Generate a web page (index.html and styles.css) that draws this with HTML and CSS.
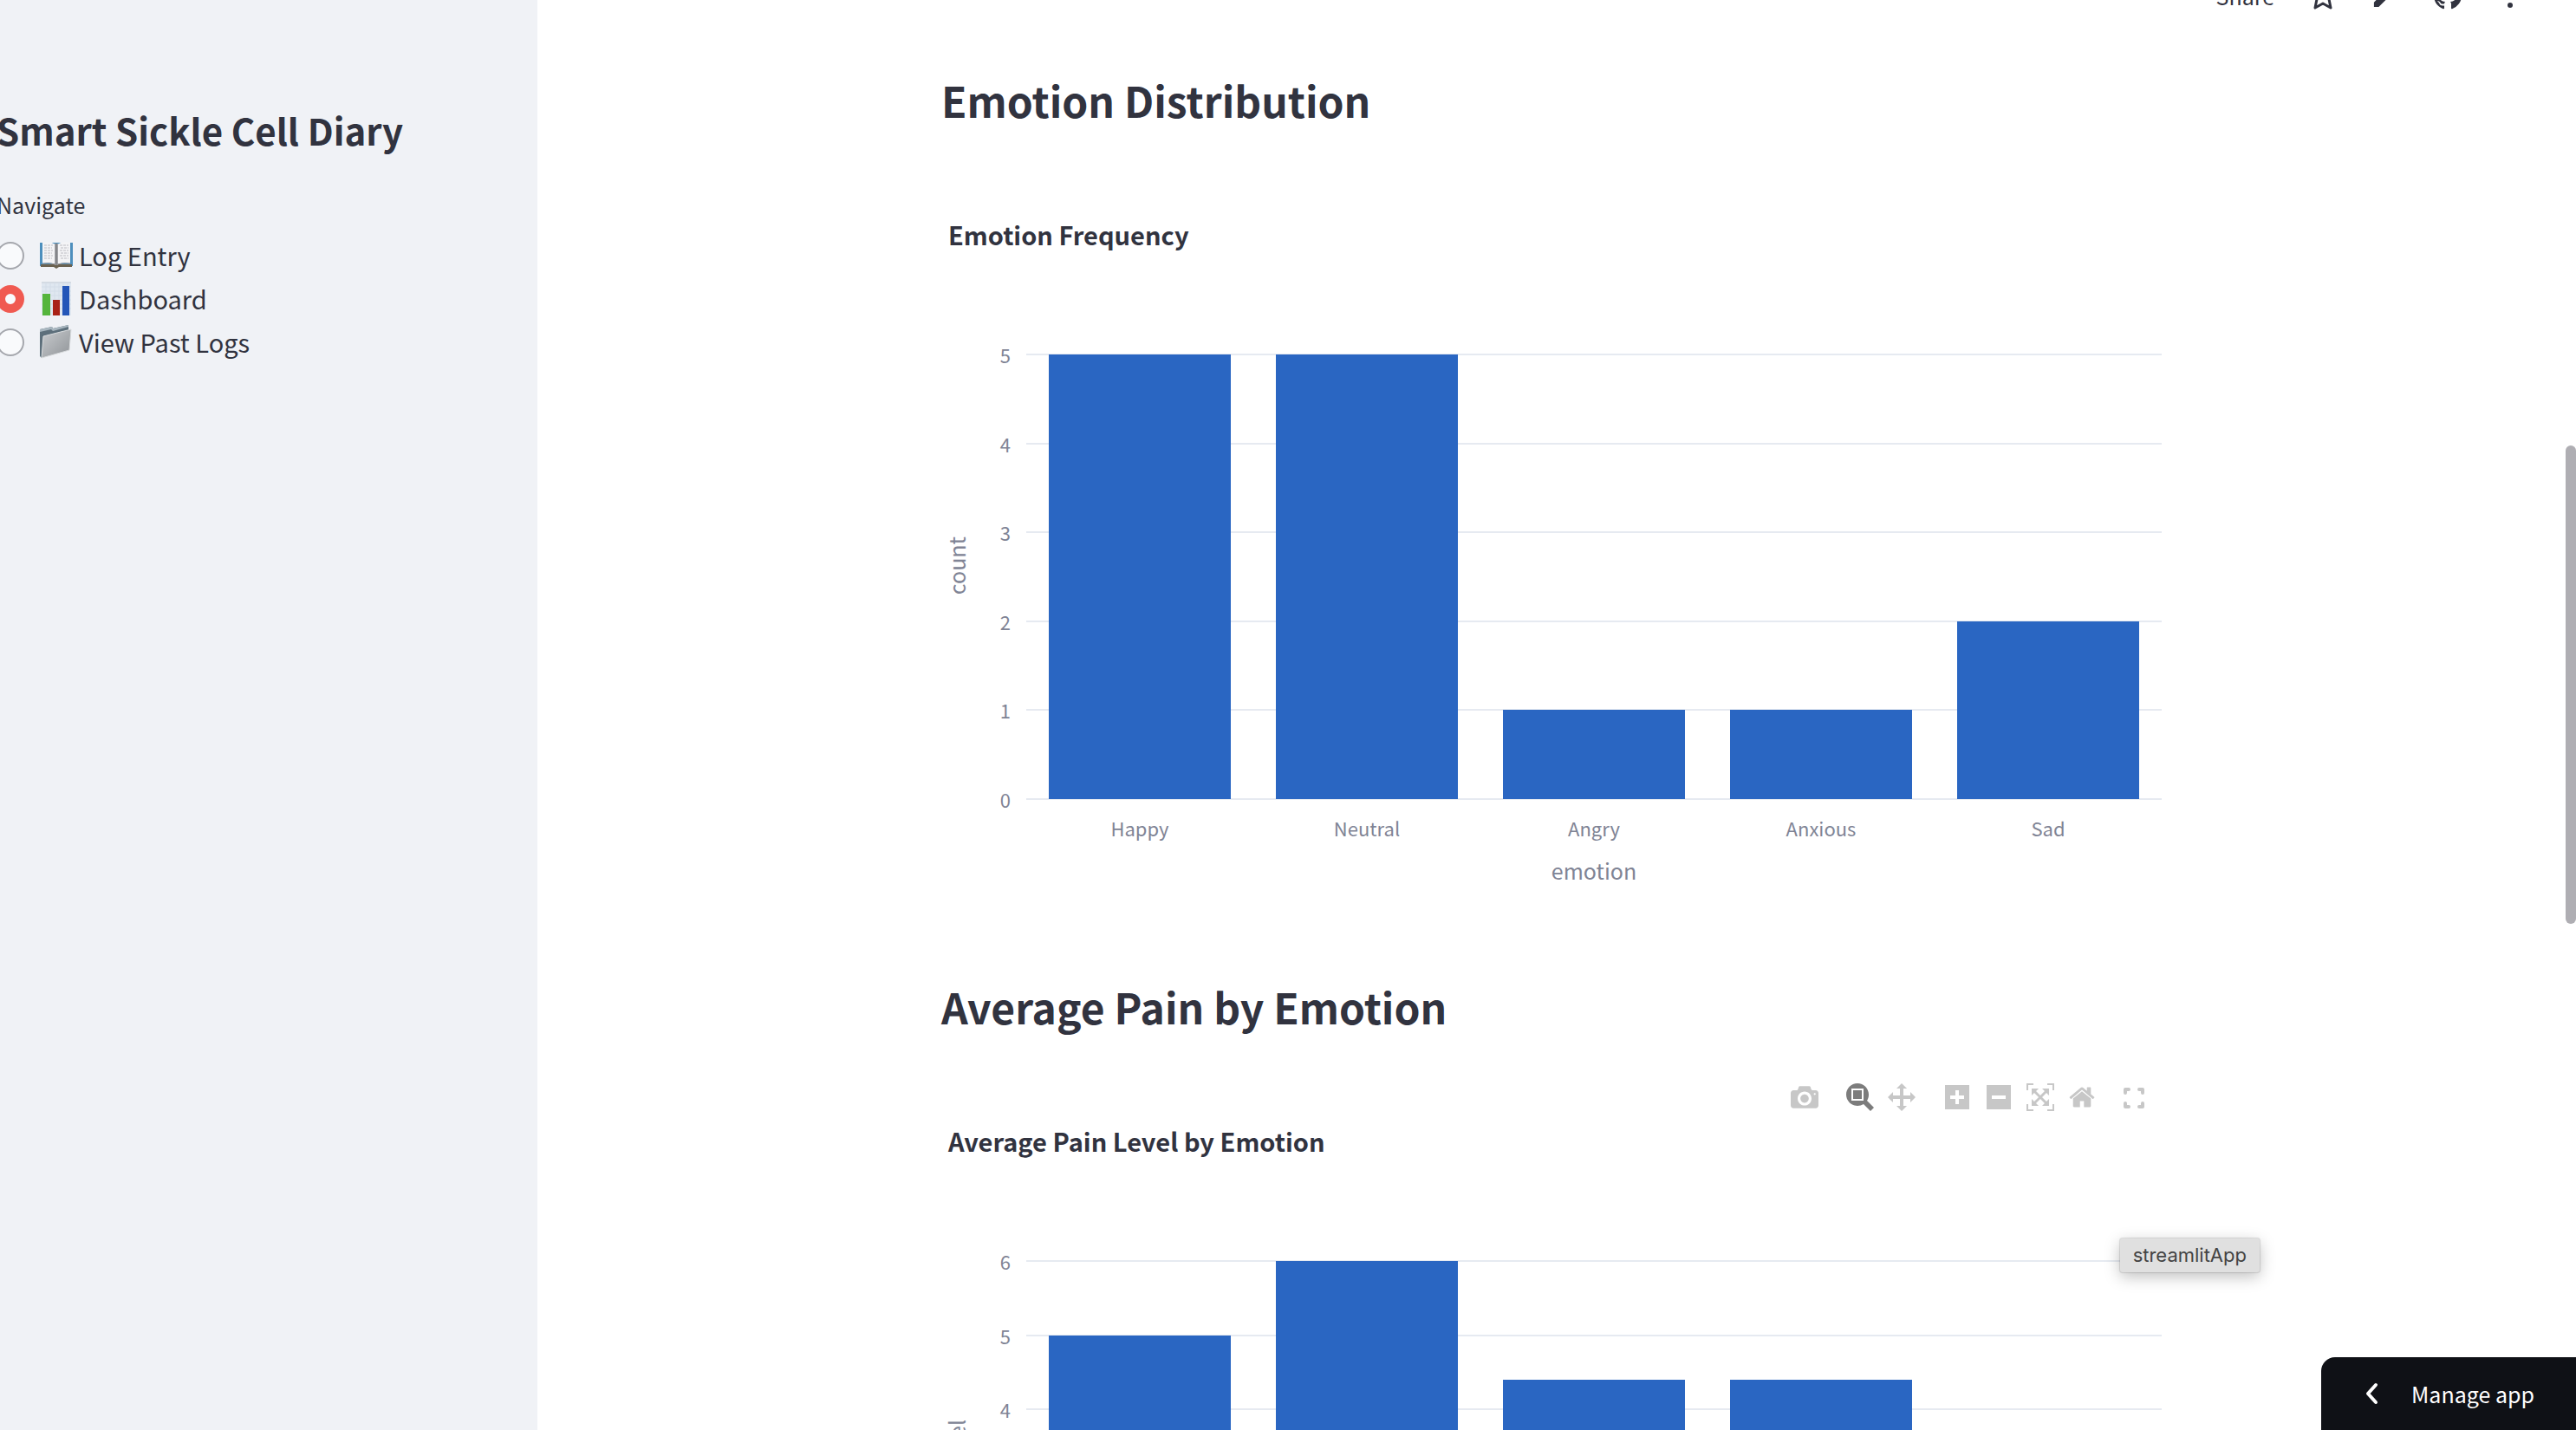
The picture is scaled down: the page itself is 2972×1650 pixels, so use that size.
FILE: index.html
```html
<!DOCTYPE html>
<html lang="en">
<head>
<meta charset="utf-8">
<meta name="viewport" content="width=device-width, initial-scale=1">
<title>Smart Sickle Cell Diary</title>
<link rel="stylesheet" href="styles.css">
</head>
<body>
<div class="app">
  <aside class="sidebar">
    <h1 class="app-title">Smart Sickle Cell Diary</h1>
    <fieldset class="nav">
      <legend class="nav-label">Navigate</legend>
      <label class="nav-item">
        <input type="radio" name="page" class="nav-radio">
        <svg class="emoji" viewBox="0 3 40 40" aria-hidden="true">
          <path d="M1 8h38v27H1z" fill="#4d8fbd"/>
          <path d="M2 33h36v3H23l-3 2-3-2H2z" fill="#6b6250"/>
          <path d="M4 8q9-2 15 2v23q-7-3-15-1z" fill="#f4f4f6"/>
          <path d="M36 8q-9-2-15 2v23q7-3 15-1z" fill="#f4f4f6"/>
          <path d="M18 9h4v25h-4z" fill="#a3a4a8"/>
          <path d="M20 9v25" stroke="#66676b"/>
          <path d="M6 11h10M6 14h9M6 17h10M6 20h9M6 23h10M6 26h9M24 11h10M25 14h9M24 17h10M25 20h9M24 23h10M25 26h9" stroke="#bcbcc2" stroke-dasharray="3 1"/>
          <path d="M4 32q8-1 15 1h2q7-2 15-1" fill="none" stroke="#8d8e92"/>
        </svg>
        <span>Log Entry</span>
      </label>
      <label class="nav-item">
        <input type="radio" name="page" class="nav-radio" checked>
        <svg class="emoji" viewBox="0 0 40 40" aria-hidden="true">
          <path d="M3 0h34v39H3z" fill="#dfe7f0"/>
          <path d="M3 1h34" stroke="#c9cfd6"/>
          <path d="M8 1v38M13 1v38M18 1v38M23 1v38M28 1v38M33 1v38M3 6h34M3 11h34M3 16h34M3 21h34M3 26h34M3 31h34" stroke="#d3dde8"/>
          <path d="M4 14h9v25H4z" fill="#55b53c"/>
          <path d="M16 21h8v18h-8z" fill="#a92217"/>
          <path d="M27 5h8v34h-8z" fill="#2456b8"/>
        </svg>
        <span>Dashboard</span>
      </label>
      <label class="nav-item">
        <input type="radio" name="page" class="nav-radio">
        <svg class="emoji" viewBox="0 0 40 40" aria-hidden="true">
          <defs>
            <linearGradient id="folder" x1="0" y1="0" x2="1" y2="1">
              <stop offset="0" stop-color="#c9cccf"/>
              <stop offset="1" stop-color="#8f9397"/>
            </linearGradient>
          </defs>
          <path d="M1 5l14-3 1 2 18-4v8L3 38 1 36z" fill="#5d6f7b"/>
          <path d="M1 5l14-3 1 2 18-4v2L16 7l-2-2L1 8z" fill="#a9b7c0"/>
          <path d="M5 13L37 5 35 29 3 38z" fill="url(#folder)" stroke="#d9dcde"/>
        </svg>
        <span>View Past Logs</span>
      </label>
    </fieldset>
  </aside>

  <main class="main">
    <div class="content">
      <section class="block">
        <h2 class="heading">Emotion Distribution</h2>
        <figure class="chart">
          <figcaption class="chart-title">Emotion Frequency</figcaption>
          <div class="y-axis">
            <span class="y-title">count</span>
            <ol class="y-ticks"><li>5</li><li>4</li><li>3</li><li>2</li><li>1</li><li>0</li></ol>
          </div>
          <div class="plot">
            <div class="grid"><i></i><i></i><i></i><i></i><i></i><i></i></div>
            <div class="slot"><div class="bar" style="height:100%"></div></div>
            <div class="slot"><div class="bar" style="height:100%"></div></div>
            <div class="slot"><div class="bar" style="height:20%"></div></div>
            <div class="slot"><div class="bar" style="height:20%"></div></div>
            <div class="slot"><div class="bar" style="height:40%"></div></div>
          </div>
          <div class="x-axis">
            <ol class="x-ticks"><li>Happy</li><li>Neutral</li><li>Angry</li><li>Anxious</li><li>Sad</li></ol>
            <div class="x-title">emotion</div>
          </div>
        </figure>
      </section>

      <section class="block">
        <h2 class="heading">Average Pain by Emotion</h2>
        <figure class="chart">
          <div class="modebar">
            <div class="group">
              <button class="tool" type="button" aria-label="Download plot as a png"><svg viewBox="0 0 1000 1000"><path transform="matrix(1 0 0 -1 0 850)" d="m500 450c-83 0-150-67-150-150 0-83 67-150 150-150 83 0 150 67 150 150 0 83-67 150-150 150z m400 150h-120c-16 0-34 13-39 29l-31 93c-6 15-23 28-40 28h-340c-16 0-34-13-39-28l-31-94c-6-15-23-28-40-28h-120c-55 0-100-45-100-100v-450c0-55 45-100 100-100h800c55 0 100 45 100 100v450c0 55-45 100-100 100z m-400-550c-138 0-250 112-250 250 0 138 112 250 250 250 138 0 250-112 250-250 0-138-112-250-250-250z m365 380c-19 0-35 16-35 35 0 19 16 35 35 35 19 0 35-16 35-35 0-19-16-35-35-35z"/></svg></button>
            </div>
            <div class="group">
              <button class="tool active" type="button" aria-label="Zoom"><svg viewBox="0 0 1000 1000"><path transform="matrix(1 0 0 -1 0 850)" d="m1000-25l-250 251c40 63 63 138 63 218 0 224-182 406-407 406-224 0-406-182-406-406s183-406 407-406c80 0 155 22 218 62l250-250 125 125z m-812 250l0 438 437 0 0-438-437 0z m62 375l313 0 0-312-313 0 0 312z"/></svg></button>
              <button class="tool" type="button" aria-label="Pan"><svg viewBox="0 0 1000 1000"><path transform="matrix(1 0 0 -1 0 850)" d="m1000 350l-187 188 0-125-250 0 0 250 125 0-188 187-187-187 125 0 0-250-250 0 0 125-188-188 186-187 0 125 252 0 0-250-125 0 187-188 188 188-125 0 0 250 250 0 0-126 187 188z"/></svg></button>
            </div>
            <div class="group">
              <button class="tool" type="button" aria-label="Zoom in"><svg viewBox="-62 0 1000 1000"><path transform="matrix(1 0 0 -1 0 850)" d="m1 787l0-875 875 0 0 875-875 0z m687-500l-187 0 0-187-125 0 0 187-188 0 0 125 188 0 0 187 125 0 0-187 187 0 0-125z"/></svg></button>
              <button class="tool" type="button" aria-label="Zoom out"><svg viewBox="-62 0 1000 1000"><path transform="matrix(1 0 0 -1 0 850)" d="m0 788l0-876 875 0 0 876-875 0z m688-500l-500 0 0 125 500 0 0-125z"/></svg></button>
              <button class="tool" type="button" aria-label="Autoscale"><svg viewBox="0 0 1000 1000"><path transform="matrix(1 0 0 -1 0 850)" d="m250 850l-187 0-63 0 0-62 0-188 63 0 0 188 187 0 0 62z m688 0l-188 0 0-62 188 0 0-188 62 0 0 188 0 62-62 0z m-875-938l0 188-63 0 0-188 0-62 63 0 187 0 0 62-187 0z m875 188l0-188-188 0 0-62 188 0 62 0 0 62 0 188-62 0z m-125 188l-1 0-93-94-156 156 156 156 92-93 2 0 0 250-250 0 0-2 93-92-156-156-156 156 94 92 0 2-250 0 0-250 0 0 93 93 157-156-157-156-93 94 0 0 0-250 250 0 0 0-94 93 156 157 156-157-93-93 0 0 250 0 0 250z"/></svg></button>
              <button class="tool" type="button" aria-label="Reset axes"><svg viewBox="-36 0 1000 1000"><path transform="matrix(1 0 0 -1 0 850)" d="m786 296v-267q0-15-11-26t-25-10h-214v214h-143v-214h-214q-15 0-25 10t-11 26v267q0 1 0 2t0 2l321 264 321-264q1-1 1-4z m124 39l-34-41q-5-5-12-6h-2q-7 0-12 3l-386 322-386-322q-7-4-13-4-7 2-12 7l-35 41q-4 5-3 13t6 12l401 334q18 15 42 15t43-15l136-114v109q0 8 5 13t13 5h107q8 0 13-5t5-13v-227l122-102q5-5 6-12t-4-13z"/></svg></button>
            </div>
            <div class="group">
              <button class="tool narrow" type="button" aria-label="Fullscreen"><svg viewBox="0 0 32 32"><path d="M6 11V7h4M22 7h4v4M26 23v4h-4M10 27H6v-4" fill="none" stroke="currentColor" stroke-width="4" stroke-linecap="round" stroke-linejoin="round"/></svg></button>
            </div>
          </div>
          <figcaption class="chart-title">Average Pain Level by Emotion</figcaption>
          <div class="y-axis">
            <span class="y-title">pain_level</span>
            <ol class="y-ticks"><li>6</li><li>5</li><li>4</li><li>3</li><li>2</li><li>1</li><li>0</li></ol>
          </div>
          <div class="plot">
            <div class="grid"><i></i><i></i><i></i><i></i><i></i><i></i><i></i></div>
            <div class="slot"><div class="bar" style="height:83.33%"></div></div>
            <div class="slot"><div class="bar" style="height:100%"></div></div>
            <div class="slot"><div class="bar" style="height:73.33%"></div></div>
            <div class="slot"><div class="bar" style="height:73.33%"></div></div>
            <div class="slot"><div class="bar" style="height:33.33%"></div></div>
          </div>
          <div class="x-axis">
            <ol class="x-ticks"><li>Happy</li><li>Neutral</li><li>Angry</li><li>Anxious</li><li>Sad</li></ol>
            <div class="x-title">emotion</div>
          </div>
        </figure>
      </section>
    </div>
  </main>

  <header class="toolbar">
    <button class="share" type="button">Share</button>
    <button class="action" type="button" aria-label="Favorite"><svg viewBox="0 0 32 32"><path d="M16 3l4 9 10 1-7 7 2 10-9-5-9 5 2-10-7-7 10-1z" fill="none" stroke="currentColor" stroke-width="3" stroke-linejoin="round"/></svg></button>
    <button class="action" type="button" aria-label="Edit"><svg viewBox="1 1 22 22"><path d="M3 17.25V21h3.75L17.81 9.94l-3.75-3.75zM20.71 7.04a1 1 0 0 0 0-1.41l-2.34-2.34a1 1 0 0 0-1.41 0l-1.83 1.83 3.75 3.75z" fill="currentColor"/></svg></button>
    <button class="action" type="button" aria-label="View source on GitHub"><svg viewBox="0 0 16 16"><path fill="currentColor" d="M8 0C3.58 0 0 3.58 0 8c0 3.54 2.29 6.53 5.47 7.59.4.07.55-.17.55-.38 0-.19-.01-.82-.01-1.49-2.01.37-2.53-.49-2.69-.94-.09-.23-.48-.94-.82-1.13-.28-.15-.68-.52-.01-.53.63-.01 1.08.58 1.23.82.72 1.21 1.87.87 2.33.66.07-.52.28-.87.51-1.07-1.78-.2-3.64-.89-3.64-3.95 0-.87.31-1.59.82-2.15-.08-.2-.36-1.02.08-2.12 0 0 .67-.21 2.2.82.64-.18 1.32-.27 2-.27s1.36.09 2 .27c1.53-1.04 2.2-.82 2.2-.82.44 1.1.16 1.92.08 2.12.51.56.82 1.27.82 2.15 0 3.07-1.87 3.75-3.65 3.95.29.25.54.73.54 1.48 0 1.07-.01 1.93-.01 2.2 0 .21.15.46.55.38A8.01 8.01 0 0 0 16 8c0-4.42-3.58-8-8-8z"/></svg></button>
    <button class="action" type="button" aria-label="Main menu"><svg viewBox="0 0 32 32"><g fill="currentColor"><circle cx="16" cy="5" r="3"/><circle cx="16" cy="16" r="3"/><circle cx="16" cy="27" r="3"/></g></svg></button>
  </header>

  <div class="scroll-thumb"></div>
  <div class="tooltip" role="tooltip">streamlitApp</div>
  <button class="manage" type="button">
    <svg viewBox="0 0 16 28" aria-hidden="true"><path d="M13 4L4 14l9 10" fill="none" stroke="currentColor" stroke-width="4" stroke-linecap="round" stroke-linejoin="round"/></svg>
    <span>Manage app</span>
  </button>
</div>
</body>
</html>
```
FILE: styles.css
```css
* {
  box-sizing: border-box;
}

body {
  margin: 0;
  background: #fff;
  color: #31333f;
  font-family: "Noto Sans CJK JP", "Noto Sans", sans-serif;
  font-size: 29px;
}

button {
  padding: 0;
  border: 0;
  background: none;
  color: inherit;
  font: inherit;
}

svg {
  display: block;
}

ol {
  margin: 0;
  padding: 0;
  list-style: none;
}

.app {
  position: relative;
  display: flex;
  height: 100vh;
  overflow: hidden;
}

/* Sidebar */
.sidebar {
  flex: 0 0 620px;
  padding-top: 120px;
  background: #f0f2f6;
}

.app-title {
  margin: 0 0 38px -4px;
  font-size: 42px;
  line-height: 60px;
  white-space: nowrap;
}

.nav {
  margin: 0 0 0 -4px;
  padding: 0;
  border: 0;
}

.nav-label {
  margin-bottom: 16px;
  padding: 0;
  font-size: 25px;
  line-height: 36px;
}

.nav-item {
  display: flex;
  align-items: center;
  height: 50px;
  line-height: 44px;
}

.nav-item span {
  padding-bottom: 3px;
}

.nav-radio {
  appearance: none;
  width: 32px;
  height: 32px;
  margin: 0 17px 0 0;
  border: 2px solid #a5a7ad;
  border-radius: 50%;
  background: #f9fafc;
}

.nav-radio:checked {
  border: 10px solid #f05a51;
}

.emoji {
  width: 40px;
  height: 40px;
  margin-right: 6px;
}

/* Main column */
.main {
  flex: 1;
  margin-right: 12px;
  padding-top: 81px;
  overflow: hidden;
}

.content {
  display: flex;
  flex-direction: column;
  gap: 105px;
  max-width: 1408px;
  margin: 0 auto;
}

.heading {
  margin: 0 0 101px;
  font-size: 48px;
  line-height: 68px;
}

/* Charts */
.chart {
  position: relative;
  display: grid;
  grid-template-columns: 98px 1fr;
  margin: 0;
  color: #808495;
}

.chart-title {
  grid-column: 1 / -1;
  margin: 0 0 119px 8px;
  color: #31333f;
  font-size: 29px;
  font-weight: 700;
  line-height: 40px;
}

.y-axis {
  display: flex;
  justify-content: space-between;
  align-items: center;
  padding-right: 18px;
  font-size: 22px;
}

.y-title {
  margin-bottom: 26px;
  writing-mode: vertical-rl;
  transform: rotate(180deg);
  font-size: 25px;
  line-height: 34px;
}

.y-ticks {
  display: flex;
  flex-direction: column;
  justify-content: space-between;
  align-self: stretch;
  margin: -16px 0;
  line-height: 32px;
}

.plot {
  position: relative;
  display: flex;
  align-items: flex-end;
  height: 513px;
}

.grid {
  position: absolute;
  inset: -1px 0;
  display: flex;
  flex-direction: column;
  justify-content: space-between;
}

.grid i {
  height: 2px;
  background: #e6eaf1;
}

.slot {
  position: relative;
  flex: 1;
  height: 100%;
  display: flex;
  align-items: flex-end;
  justify-content: center;
}

.bar {
  width: 80%;
  background: #2a66c2;
}

.x-axis {
  grid-column: 2;
  text-align: center;
}

.x-ticks {
  display: flex;
  margin: 17px 0 15px;
  font-size: 22px;
  line-height: 32px;
}

.x-ticks li {
  flex: 1;
}

.x-title {
  font-size: 25px;
  line-height: 36px;
}

/* Chart tools float above the chart title */
.modebar {
  position: absolute;
  top: -46px;
  right: 12px;
  display: flex;
  gap: 16px;
  color: #c7c7c7;
}

.group {
  display: flex;
}

.tool {
  display: flex;
  justify-content: center;
  width: 48px;
}

.tool svg {
  width: 32px;
  height: 32px;
  fill: currentColor;
}

.tool.active {
  color: #7c7c7c;
}

.tool.narrow {
  width: 40px;
}

/* Header actions, partly scrolled off the top */
.toolbar {
  position: absolute;
  top: -29px;
  right: 60px;
  display: flex;
  align-items: center;
  gap: 40px;
  height: 48px;
}

.share {
  font-size: 25px;
  line-height: 48px;
}

.action svg {
  width: 32px;
  height: 32px;
}

.scroll-thumb {
  position: absolute;
  top: 514px;
  right: 0;
  width: 12px;
  height: 552px;
  border-radius: 6px;
  background: #afaeb3;
}

.tooltip {
  position: absolute;
  top: 1429px;
  right: 365px;
  padding: 0 15px;
  border-radius: 3px;
  background: #e0e0e0;
  box-shadow: 0 0 1px 1px rgba(0, 0, 0, 0.12), 0 5px 18px rgba(0, 0, 0, 0.25);
  color: #444;
  font-family: Inter, sans-serif;
  font-size: 22px;
  line-height: 39px;
}

.manage {
  position: absolute;
  right: 0;
  bottom: 0;
  display: flex;
  align-items: center;
  gap: 38px;
  height: 84px;
  padding: 0 48px 0 50px;
  border-top-left-radius: 16px;
  background: #0f1116;
  color: #fff;
  font-size: 25px;
}

.manage svg {
  width: 16px;
  height: 28px;
}
```
